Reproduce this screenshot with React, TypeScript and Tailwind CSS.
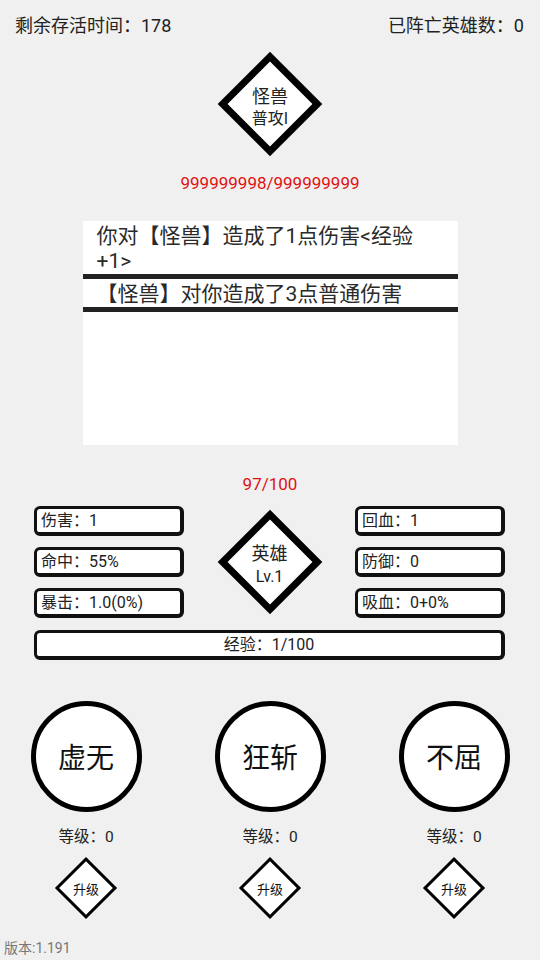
import React from "react";

function Diamond({ size, border, pad, children }: { size: string; border: string; pad: string; children: React.ReactNode }) {
  return (
    <div className="grid place-items-center">
      <div className={`col-start-1 row-start-1 rotate-45 bg-white border-black ${size} ${border}`} />
      <div className={`relative z-10 col-start-1 row-start-1 flex flex-col items-center ${pad}`}>{children}</div>
    </div>
  );
}

function Stat({ text }: { text: string }) {
  return (
    <div className="h-[30px] flex items-center bg-white border-[#111] border-t-[3px] border-l-[3px] border-r-[4px] border-b-[4px] rounded-[6px] pl-[4px] pt-[1px] text-[16px] leading-none text-[#222]">
      {text}
    </div>
  );
}

function Skill({ name }: { name: string }) {
  return (
    <div className="w-[184px] shrink-0 flex flex-col items-center">
      <div className="w-[111px] h-[111px] rounded-full border-[5px] border-black bg-white flex items-center justify-center pt-[4px] text-[28px] text-[#111]">
        {name}
      </div>
      <div className="mt-[15px] h-[20px] leading-[20px] text-[15.5px] text-[#222]">等级：0</div>
      <div className="mt-[10px] h-[62px] flex items-center justify-center">
        <Diamond size="w-[44px] h-[44px]" border="border-[3px]" pad="pt-[2px]">
          <span className="text-[13px] text-[#111] leading-none">升级</span>
        </Diamond>
      </div>
    </div>
  );
}

export default function App() {
  return (
    <div className="w-[540px] h-[960px] bg-[#f0f0f0] flex flex-col font-[family-name:Roboto,'Noto_Sans_CJK_SC',sans-serif] overflow-hidden">
      <div className="h-[50px] flex items-center justify-between pl-[15px] pr-[16px] text-[18px] text-[#222]">
        <span>剩余存活时间：178</span>
        <span>已阵亡英雄数：0</span>
      </div>

      <div className="mt-[2px] h-[104px] flex items-center justify-center">
        <Diamond size="w-[74px] h-[74px]" border="border-[7px]" pad="pt-[8px]">
          <span className="text-[18px] leading-[22px] text-[#222]">怪兽</span>
          <span className="text-[16px] leading-[22px] text-[#222]">普攻I</span>
        </Diamond>
      </div>

      <div className="mt-[17px] h-[20px] leading-[20px] text-center text-[17px] text-[#e01010]">999999998/999999999</div>

      <div className="mt-[28px] mx-auto w-[375px] h-[224px] bg-white text-[21px] leading-[25px] text-[#2a2a2a]">
        <div className="pt-[3px] pl-[14px]">
          <div className="whitespace-nowrap">你对【怪兽】造成了1点伤害&lt;经验</div>
          <div>+1&gt;</div>
        </div>
        <div className="h-[5px] bg-[#222]" />
        <div className="pt-[3px] pl-[14px]">
          <div className="whitespace-nowrap">【怪兽】对你造成了3点普通伤害</div>
        </div>
        <div className="h-[5px] bg-[#222]" />
      </div>

      <div className="mt-[29px] h-[20px] leading-[20px] text-center text-[17px] text-[#e01010]">97/100</div>

      <div className="mt-[12px] pl-[34px] pr-[35px]">
        <div className="grid grid-cols-[150px_1fr_150px]">
          <div className="flex flex-col gap-[11px]">
            <Stat text="伤害：1" />
            <Stat text="命中：55%" />
            <Stat text="暴击：1.0(0%)" />
          </div>
          <div className="flex items-center justify-center">
            <Diamond size="w-[74px] h-[74px]" border="border-[7px]" pad="pt-[6px]">
              <span className="text-[18px] leading-[23px] text-[#222]">英雄</span>
              <span className="text-[16px] leading-[23px] text-[#222]">Lv.1</span>
            </Diamond>
          </div>
          <div className="flex flex-col gap-[11px]">
            <Stat text="回血：1" />
            <Stat text="防御：0" />
            <Stat text="吸血：0+0%" />
          </div>
        </div>
        <div className="mt-[12px] h-[30px] flex items-center justify-center bg-white border-[#111] border-t-[3px] border-l-[3px] border-r-[4px] border-b-[4px] rounded-[6px] pt-[1px] text-[16px] text-[#222]">
          经验：1/100
        </div>
      </div>

      <div className="mt-[41px] flex justify-center">
        <Skill name="虚无" />
        <Skill name="狂斩" />
        <Skill name="不屈" />
      </div>

      <div className="mt-[20px] pl-[4px] h-[18px] leading-[18px] text-[14px] text-[#777]">版本:1.191</div>
    </div>
  );
}
